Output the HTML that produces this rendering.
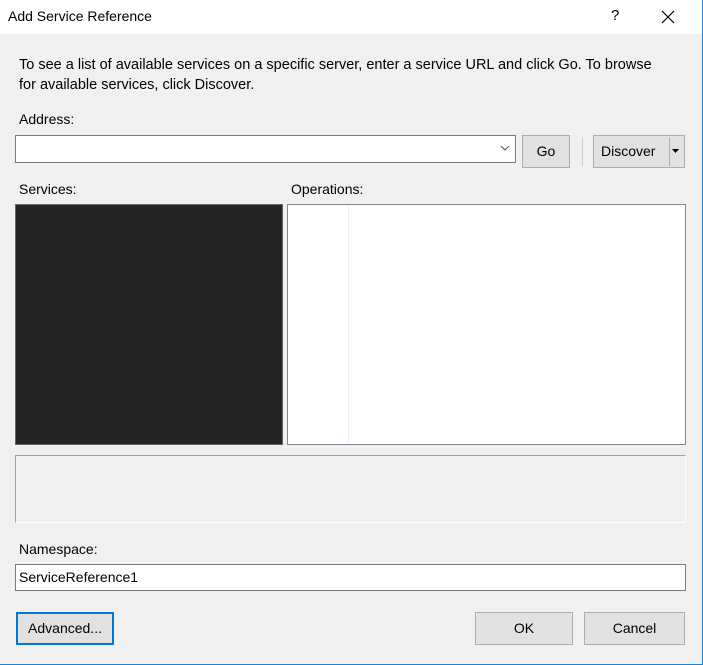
<!DOCTYPE html>
<html><head><style>
*{box-sizing:border-box;margin:0;padding:0}
body{width:703px;height:665px;background:#f0f0f0;font-family:"Liberation Sans",sans-serif;font-size:14px;color:#000;position:relative;overflow:hidden}
.a{position:absolute}
.btn{position:absolute;background:#e1e1e1;border:1px solid #adadad;text-align:center;font-size:14px}
</style></head><body>
<div class="a" style="left:0;top:0;width:703px;height:34px;background:#fff"></div>
<div class="a" style="left:8px;top:8px;font-size:14px">Add Service Reference</div>
<div class="a" style="left:611px;top:7px;font-size:15px">?</div>
<svg class="a" style="left:660px;top:9px" width="16" height="16"><path d="M2 2L14 14M14 2L2 14" stroke="#000" stroke-width="1.2"/></svg>
<div class="a" style="left:702px;top:0;width:1px;height:665px;background:#1883d7"></div>
<div class="a" style="left:0;top:664px;width:703px;height:1px;background:#1883d7"></div>
<div class="a" style="left:19px;top:55px;line-height:20px;width:680px;font-size:14.5px">To see a list of available services on a specific server, enter a service URL and click Go. To browse<br>for available services, click Discover.</div>
<div class="a" style="left:19px;top:111px">Address:</div>
<div class="a" style="left:15px;top:135px;width:501px;height:28px;background:#fff;border:1px solid #7a7a7a"></div>
<svg class="a" style="left:500px;top:145px" width="10" height="7"><path d="M1 1L5 5L9 1" stroke="#555" fill="none"/></svg>
<div class="btn" style="left:522px;top:135px;width:48px;height:33px;line-height:31px">Go</div>
<div class="a" style="left:582px;top:137px;width:1px;height:29px;background:#ccc"></div>
<div class="btn" style="left:593px;top:135px;width:92px;height:33px;line-height:31px;text-align:left;padding-left:7px">Discover</div>
<div class="a" style="left:669px;top:137px;width:1px;height:29px;background:#adadad"></div>
<svg class="a" style="left:672px;top:149px" width="8" height="5"><path d="M0 0H7L3.5 4Z" fill="#000"/></svg>
<div class="a" style="left:19px;top:181px">Services:</div>
<div class="a" style="left:291px;top:181px">Operations:</div>
<div class="a" style="left:15px;top:204px;width:268px;height:241px;background:#252526;border:1px solid #666"></div>
<div class="a" style="left:287px;top:204px;width:399px;height:241px;background:#fff;border:1px solid #828790"></div>
<div class="a" style="left:348px;top:205px;width:1px;height:239px;background:#e6f0fa"></div>
<div class="a" style="left:15px;top:455px;width:671px;height:68px;border:1px solid #a0a0a0;border-right-color:#fff;border-bottom-color:#fff"></div>
<div class="a" style="left:19px;top:541px">Namespace:</div>
<div class="a" style="left:15px;top:564px;width:671px;height:27px;background:#fff;border:1px solid #7a7a7a;padding-left:3px;line-height:25px">ServiceReference1</div>
<div class="btn" style="left:16px;top:612px;width:98px;height:33px;line-height:29px;border:2px solid #0078d7">Advanced...</div>
<div class="btn" style="left:475px;top:612px;width:98px;height:33px;line-height:31px">OK</div>
<div class="btn" style="left:584px;top:612px;width:101px;height:33px;line-height:31px">Cancel</div>
</body></html>
